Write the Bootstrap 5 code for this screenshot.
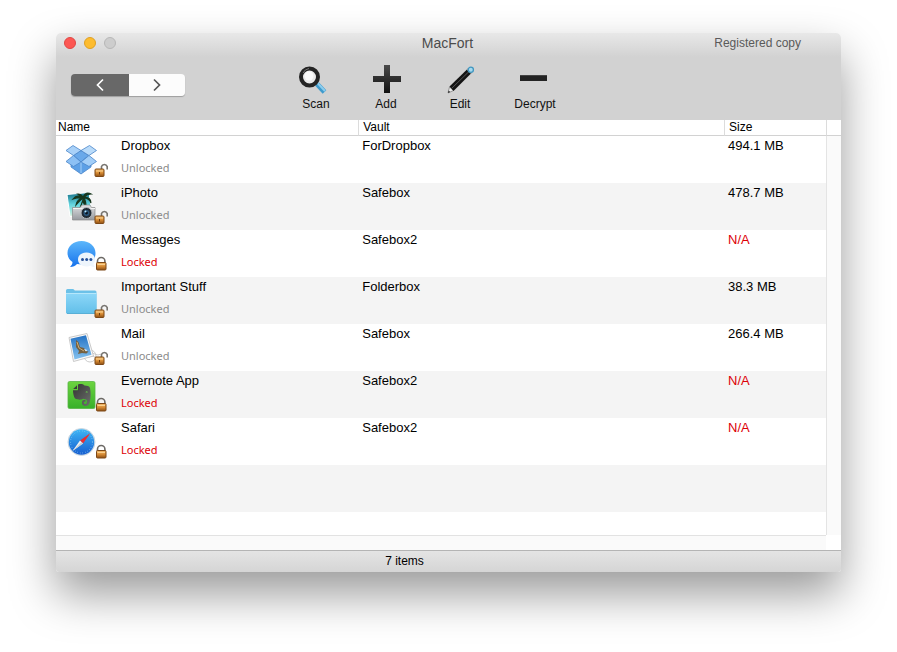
<!DOCTYPE html>
<html lang="en">
<head>
<meta charset="utf-8">
<meta name="viewport" content="width=device-width, initial-scale=1">
<title>MacFort</title>
<link rel="stylesheet" href="https://cdn.jsdelivr.net/npm/bootstrap@5.3.0/dist/css/bootstrap.min.css">
<style>
body { font-family: "Liberation Sans", Arial, sans-serif; font-size: 12px; color: #000; background: #fff; padding: 33px 56px 80px; }
.mac-window { border-radius: 5px 5px 3px 3px; box-shadow: 0 22px 46px rgba(0,0,0,.4); background: #fff; }
.chrome { background: linear-gradient(#e8e8e8, #d2d2d2 24px); border-radius: 5px 5px 0 0; }
.titlebar { display: grid; grid-template-columns: 1fr auto 1fr; height: 20px; padding: 0 40px 0 8px; }
.titlebar h1 { font-size: 14px; font-weight: 400; color: #4c4c4c; padding-left: 30px; }
.registered { color: #5a5a5a; }
.light { width: 12px; height: 12px; border-radius: 50%; border: 1px solid #e04744; background: #fc5753; padding: 0; }
.light-min { background: #fdbc2f; border-color: #dfa023; }
.light-off { background: #cdcdcd; border-color: #b7b7b7; }
.toolbar { padding: 11px 15px 8px; }
.history { height: 22px; width: 114px; margin: 10px 96px 0 0; border-radius: 4px; overflow: hidden; box-shadow: 0 1px 1px rgba(0,0,0,.25); }
.history button { border: 0; padding: 0; width: 56px; background: #fcfcfc; color: #555; }
.history .back { width: 58px; background: #686868; color: #fff; }
.tool { border: 0; background: none; padding: 0; width: 70px; color: #111; line-height: 16px; }
.tool-edit { width: 78px; }
.tool-decrypt { width: 72px; }
.items { table-layout: fixed; width: 100%; border-collapse: separate; border-spacing: 0; }
.items th { height: 16px; padding: 0 0 0 4px; font-weight: 400; line-height: 15px; border-bottom: 1px solid #d2d2d2; border-left: 1px solid #dcdcdc; }
.items th:first-child { padding-left: 2px; border-left: 0; }
.items td { height: 47px; padding: 0 0 0 4px; vertical-align: top; font-size: 13px; line-height: 20px; }
.items td:first-child { padding-left: 8px; }
.items tbody tr:nth-child(even) { background: #f4f4f4; }
.items .last-row td { height: 23px; }
.items .gutter { background: #fafafa; border-left: 1px solid #e4e4e4; padding: 0; }
.col-name { width: 38.5%; }
.col-size { width: 102px; }
.col-gutter { width: 15px; }
.app-icon { margin-top: 4px; margin-right: 9px; flex: none; }
.state { font-family: "Noto Sans", sans-serif; font-size: 11px; line-height: 24px; color: #8b8b8b; }
.locked, .missing { color: #dd0006; }
.hscroll { height: 15px; margin-right: 15px; background: #fafafa; border-top: 1px solid #e2e2e2; }
.statusbar { height: 22px; line-height: 21px; padding-right: 88px; border-top: 1px solid #b4b4b4; background: linear-gradient(#e4e4e4, #d5d5d5); border-radius: 0 0 3px 3px; }
</style>
<script src="https://cdn.jsdelivr.net/npm/bootstrap@5.3.0/dist/js/bootstrap.bundle.min.js"></script>
</head>
<body>
<svg width="0" height="0" class="position-absolute" aria-hidden="true">
  <defs>
    <linearGradient id="brass" x2="0" y2="1"><stop stop-color="#f3bc6c"/><stop offset=".5" stop-color="#d98d35"/><stop offset="1" stop-color="#8d4f14"/></linearGradient>
    <linearGradient id="bubble" x2="0" y2="1"><stop stop-color="#5cb7fb"/><stop offset="1" stop-color="#1672ec"/></linearGradient>
    <linearGradient id="folder" x2="0" y2="1"><stop stop-color="#8dd7f8"/><stop offset="1" stop-color="#62bfe9"/></linearGradient>
    <linearGradient id="leaf" x2="0" y2="1"><stop stop-color="#6cd43f"/><stop offset="1" stop-color="#38b02a"/></linearGradient>
    <linearGradient id="head" x2="1" y2="1"><stop stop-color="#333"/><stop offset="1" stop-color="#6d706d"/></linearGradient>
    <linearGradient id="compass" x2="0" y2="1"><stop stop-color="#3db5f5"/><stop offset="1" stop-color="#175fd0"/></linearGradient>
    <linearGradient id="sea" x2="0" y2="1"><stop stop-color="#146f86"/><stop offset=".5" stop-color="#63d5df"/><stop offset="1" stop-color="#d7f3dc"/></linearGradient>
    <linearGradient id="sky" x2="0" y2="1"><stop stop-color="#2472c4"/><stop offset="1" stop-color="#85c2ef"/></linearGradient>
    <linearGradient id="metal" x2="0" y2="1"><stop stop-color="#e2e3e5"/><stop offset="1" stop-color="#96999e"/></linearGradient>
    <linearGradient id="ink" x2="0" y2="1"><stop stop-color="#4b4b4b"/><stop offset="1" stop-color="#101010"/></linearGradient>
    <symbol id="lock" viewBox="0 0 48 40">
      <path d="M33.500 29v-2a3.700 3.500 0 0 1 7.400 0v2" fill="none" stroke="#6d6a66" stroke-width="1.600"/>
      <rect x="32.500" y="28.500" width="9.500" height="7.500" rx="1" fill="url(#brass)" stroke="#7d4817"/>
      <path d="M33.500 30.500h7.500" stroke="#ffdca0" stroke-width=".8"/>
    </symbol>
    <symbol id="unlock" viewBox="0 0 48 40">
      <path d="M37.500 29v-2.500a3 3 0 0 1 5.700 0v3" fill="none" stroke="#77746f" stroke-width="1.600"/>
      <rect x="31" y="29" width="9" height="7.500" rx="1" fill="url(#brass)" stroke="#7d4817"/>
      <path d="M32 31h7" stroke="#ffdca0" stroke-width=".8"/><path d="M35.500 32v2.500" stroke="#6d3d10"/>
    </symbol>
  </defs>
</svg>

<main class="mac-window">
  <header class="chrome">
    <div class="titlebar align-items-center">
      <div class="d-flex gap-2">
        <button class="light" aria-label="Close"></button>
        <button class="light light-min" aria-label="Minimize"></button>
        <button class="light light-off" aria-label="Zoom" disabled></button>
      </div>
      <h1 class="m-0">MacFort</h1>
      <span class="registered text-end">Registered copy</span>
    </div>
    <div class="toolbar d-flex align-items-start">
      <div class="history d-flex">
        <button class="back d-flex align-items-center justify-content-center" aria-label="Back"><svg width="12" height="14" fill="none" stroke="currentColor" stroke-width="1.700"><path d="M9 1.500 3.500 7 9 12.500"/></svg></button>
        <button class="d-flex align-items-center justify-content-center" aria-label="Forward"><svg width="12" height="14" fill="none" stroke="currentColor" stroke-width="1.700"><path d="M3 1.500 8.500 7 3 12.500"/></svg></button>
      </div>
      <button class="tool d-flex flex-column align-items-center">
        <svg width="36" height="32"><path d="m19 20 7.500 8" stroke="#3f9bcd" stroke-width="5"/><path d="m19.500 19 7.500 8" stroke="#8ccdee" stroke-width="2"/><circle cx="11.500" cy="13" r="8.500" fill="#e9e9e9" stroke="#242424" stroke-width="4"/><path d="M5 9a8 8 0 0 1 6-4.500" fill="none" stroke="#777" stroke-width="1"/><circle cx="11" cy="12" r="4.500" fill="#fafafa"/></svg>
        Scan
      </button>
      <button class="tool d-flex flex-column align-items-center">
        <svg width="36" height="32"><path d="M16 1h6v11h11v6H22v11h-6V18H5v-6h11z" fill="url(#ink)"/></svg>
        Add
      </button>
      <button class="tool tool-edit d-flex flex-column align-items-center">
        <svg width="36" height="32"><path d="m6 29 1.500-6 4 3.500z" fill="#eee" stroke="#777" stroke-width=".7"/><path d="m6 29 .6-2.400 1.600 1.400z" fill="#222"/><path d="M7.500 22.500 26 4.500l4 4L11.500 27z" fill="#141414"/><path d="M9.500 24.500 28 6.500" stroke="#5c5c5c" stroke-width=".9"/><path d="m25.300 5.200 4 4" stroke="#a9b4b9" stroke-width="1.300"/><circle cx="28.800" cy="5.800" r="2.600" fill="#a6d9ee" stroke="#4297c0" stroke-width="1.300"/></svg>
        Edit
      </button>
      <button class="tool tool-decrypt d-flex flex-column align-items-center">
        <svg width="36" height="32"><rect x="3" y="11" width="27" height="6" fill="#232323"/><path d="M3 11.500h27" stroke="#444"/></svg>
        Decrypt
      </button>
    </div>
  </header>

  <table class="items">
    <colgroup><col class="col-name"><col><col class="col-size"><col class="col-gutter"></colgroup>
    <thead><tr><th scope="col">Name</th><th scope="col">Vault</th><th scope="col">Size</th><th aria-hidden="true"></th></tr></thead>
    <tbody>
      <tr>
        <td><div class="d-flex"><svg class="app-icon" width="48" height="40" aria-hidden="true"><g stroke="#4a85c9" stroke-width=".8" stroke-linejoin="round"><path d="M7 20.500 17 15l10 5.500v6.500l-10 7L7 27z" fill="#5da0e6"/><path d="m17 10.500 7.500 5L17 22l-7.500-6.500z" fill="#6aa9ea"/><path d="m2 10.500 7-5 8 5-7.500 5z" fill="#a9d1f8"/><path d="m17 10.500 8.500-5 7 5-7.500 5z" fill="#b9dbfa"/><path d="M9.500 15.500 2 21.500l7.500 5L17 22z" fill="#8cc0f4"/><path d="m25 15.500 7.500 6-7.500 5-8-4.500z" fill="#a2cef8"/></g><path d="M17 22.500V33" stroke="#a5cff7"/><use href="#unlock"/></svg><div><div>Dropbox</div><div class="state">Unlocked</div></div></div></td>
        <td>ForDropbox</td><td>494.1 MB</td><td class="gutter"></td>
      </tr>
      <tr>
        <td><div class="d-flex"><svg class="app-icon" width="48" height="40" aria-hidden="true"><path d="m3 7.500 22-2 3 21-22 3z" fill="url(#sea)" stroke="#fff"/><path d="M16 21q3-7 4-12M19 11q-6-4-10 1 6-2 10-1-6 1-7 7 4-5 7-7 0 6 3 9 0-6-2-9 5 0 7 5 0-6-7-6 3-3 7-3-5-3-8 3-2-3-5-3 3 2 4 4" fill="#17371d" stroke="#17371d" stroke-width="1.200"/><path d="M8.500 20.500H16l2-2.500h8l1.500 2.500H31V33H8.500z" fill="url(#metal)" stroke="#8a8a8a" stroke-width=".7"/><path d="M9 21.500h22" stroke="#f3f3f3"/><circle cx="22.500" cy="26" r="5.500" fill="#202a33" stroke="#b5babe"/><circle cx="22.500" cy="26" r="3" fill="#29567c"/><circle cx="22.500" cy="26" r="1.400" fill="#08121d"/><circle cx="21.500" cy="24.500" r="1" fill="#b5e7ff"/><use href="#unlock"/></svg><div><div>iPhoto</div><div class="state">Unlocked</div></div></div></td>
        <td>Safebox</td><td>478.7 MB</td><td class="gutter"></td>
      </tr>
      <tr>
        <td><div class="d-flex"><svg class="app-icon" width="48" height="40" aria-hidden="true"><path d="M17.500 7C9.500 7 3.500 12 3.500 19c0 4 2 7 5 9 0 2-1 3.500-2.500 5 3 0 5.500-1 7-3 14 2 18.500-4 18.500-11C31.500 12 25.500 7 17.500 7z" fill="url(#bubble)"/><path d="M22.500 18.500c-5 0-8.500 3-8.500 7s3.500 7 8.500 7c1.500 0 3-.3 4-.8 1.500 1.200 3 1.300 4.500 1.300-1-1-1.500-2-1.500-3.300 1-1.200 1.500-2.500 1.500-4.200 0-4-3.500-7-8.500-7z" fill="#eef5fc"/><g fill="#27519a"><circle cx="18.500" cy="25.500" r="1.500"/><circle cx="22.700" cy="25.500" r="1.500"/><circle cx="26.900" cy="25.500" r="1.500"/></g><use href="#lock"/></svg><div><div>Messages</div><div class="state locked">Locked</div></div></div></td>
        <td>Safebox2</td><td class="missing">N/A</td><td class="gutter"></td>
      </tr>
      <tr>
        <td><div class="d-flex"><svg class="app-icon" width="48" height="40" aria-hidden="true"><path d="M2 9.500Q2 8 3.500 8H9q1 0 1.800 1.500H31q1.500 0 1.500 1.500v20q0 1.500-1.500 1.500H3.500Q2 32.500 2 31z" fill="#6cc1e8"/><path d="M2 12h30.500v19q0 1.500-1.500 1.500H3.500Q2 32.500 2 31z" fill="url(#folder)"/><path d="M2 12.500h30.500" stroke="#b5e7fb"/><path d="M3 32.500h29" stroke="#4ba7d1" stroke-width=".8"/><use href="#unlock"/></svg><div><div>Important Stuff</div><div class="state">Unlocked</div></div></div></td>
        <td>Folderbox</td><td>38.3 MB</td><td class="gutter"></td>
      </tr>
      <tr>
        <td><div class="d-flex"><svg class="app-icon" width="48" height="40" aria-hidden="true"><circle cx="26" cy="28" r="6" fill="none" stroke="#ccc"/><path d="M25 26q3-2 6 0t6 0M25 29q3-2 6 0t6 0" fill="none" stroke="#c4c4c4" stroke-width=".8"/><path d="m5 9.500 18-4 6.500 22.500-20 5.500z" fill="#fafafa" stroke="#bdbdbd" stroke-width=".8"/><path d="M6.500 10.800 22 7.300l5.500 19.500-17 4.700z" fill="url(#sky)"/><path d="m12 12 2.500 2 1.500 5 4 1 2 3 2.500.5-2 2-4.500-.5-4 1 1-3-3-4z" fill="#75603f"/><path d="m13 14 2 6 5 3" stroke="#cfae78" fill="none"/><path d="m20 21 3 1-1 1.500z" fill="#fff"/><use href="#unlock"/></svg><div><div>Mail</div><div class="state">Unlocked</div></div></div></td>
        <td>Safebox</td><td>266.4 MB</td><td class="gutter"></td>
      </tr>
      <tr>
        <td><div class="d-flex"><svg class="app-icon" width="48" height="40" aria-hidden="true"><rect x="4" y="6.500" width="27" height="27" rx="1.500" fill="url(#leaf)" stroke="#58b545" stroke-width=".8"/><path d="M14 9.500c2.500-.8 5-.5 6.500 1 2.500.2 5 .3 5.500 2.500 1 5 .8 10-.3 14.500-.8 3-2.400 3.700-4.700 3.500-2.600-.2-3.300-2-3-4 .3-1.700 1.500-2.500 3.500-2.300v2c-1.300-.2-1.800.3-1.600 1.300.2 1 1.400 1.200 2.300.7 1-.7 1-3.200.2-4-.9-.8-2-.3-3.400-.9-1.500 1.300-5.500 1-7.500 0-1.500-1-2.500-5.500-2.500-8.500H13c.8 0 1-.3 1-1z" fill="url(#head)"/><path d="m9.200 14 3.800-3.800V14z" fill="#3b3c3b"/><path d="M21.500 17.300q1-2 2.500 0-1.200.5-2.500 0" fill="#65c84a"/><use href="#lock"/></svg><div><div>Evernote App</div><div class="state locked">Locked</div></div></div></td>
        <td>Safebox2</td><td class="missing">N/A</td><td class="gutter"></td>
      </tr>
      <tr>
        <td><div class="d-flex"><svg class="app-icon" width="48" height="40" aria-hidden="true"><circle cx="17.500" cy="20" r="13.500" fill="#dbe7f1" stroke="#a9bdcd" stroke-width=".6"/><circle cx="17.500" cy="20" r="12.700" fill="url(#compass)"/><circle cx="17.500" cy="20" r="11" fill="none" stroke="#9cd4f6" stroke-dasharray=".6 2"/><path d="m26.500 11-10.500 7.500 3 3z" fill="#e92e31"/><path d="m16 18.500 3 3L8.500 29z" fill="#f2f2f2"/><path d="m17.500 20 1.500 1.500L8.500 29z" fill="#c6cdd3"/><use href="#lock"/></svg><div><div>Safari</div><div class="state locked">Locked</div></div></div></td>
        <td>Safebox2</td><td class="missing">N/A</td><td class="gutter"></td>
      </tr>
      <tr aria-hidden="true"><td></td><td></td><td></td><td class="gutter"></td></tr>
      <tr class="last-row bg-white" aria-hidden="true"><td></td><td></td><td></td><td class="gutter"></td></tr>
    </tbody>
  </table>
  <div class="hscroll"></div>
  <footer class="statusbar text-center">7 items</footer>
</main>
</body>
</html>
